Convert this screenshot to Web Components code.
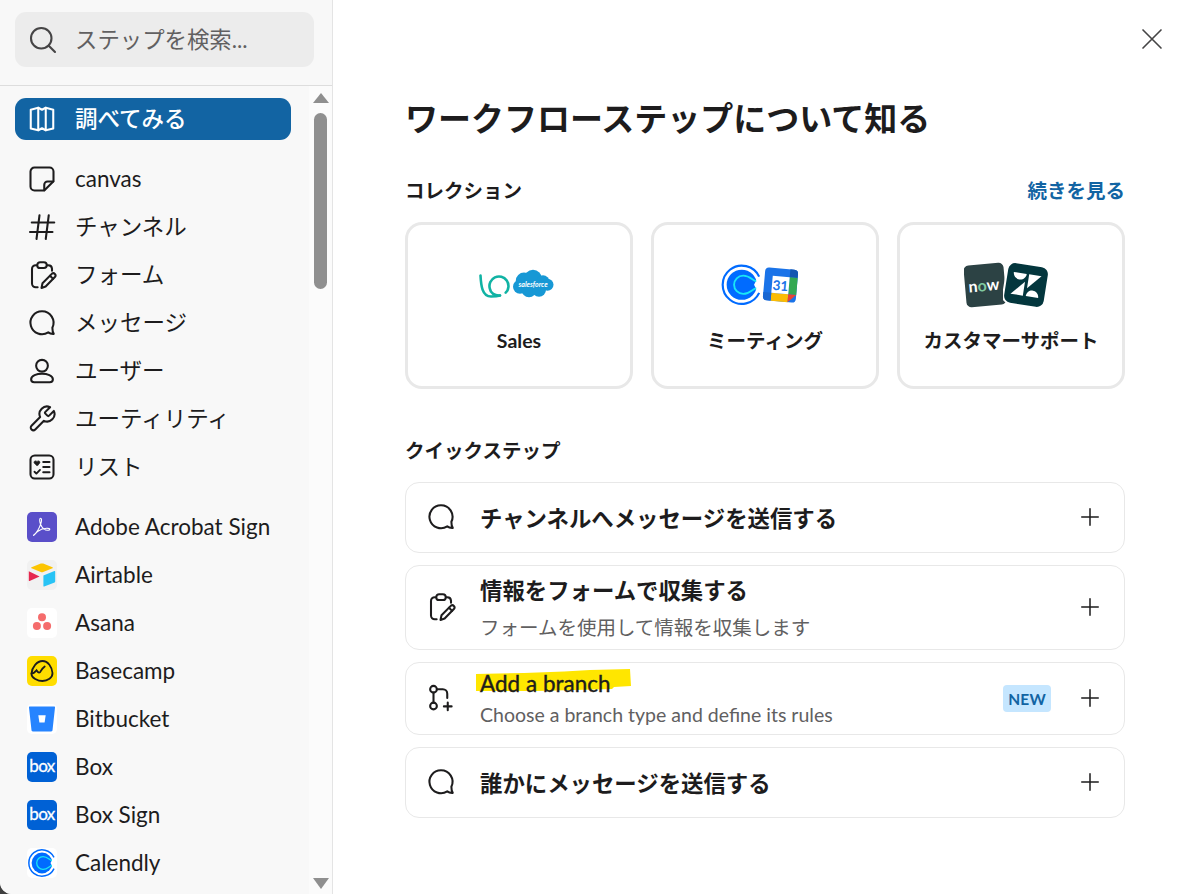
<!DOCTYPE html>
<html lang="ja">
<head>
<meta charset="utf-8">
<title>ワークフローステップ</title>
<style>
  html,body{margin:0;padding:0;background:#3f3f3f;}
  body{font-family:"Lato","Noto Sans CJK JP",sans-serif;color:#1d1c1d;width:1195px;height:894px;overflow:hidden;}
</style>
</head>
<body>
<app-shell>
  <side-bar slot="side">
    <nav-item active icon="book">調べてみる</nav-item>
    <nav-item top="15" icon="canvas">canvas</nav-item>
    <nav-item icon="hash">チャンネル</nav-item>
    <nav-item icon="form">フォーム</nav-item>
    <nav-item icon="message">メッセージ</nav-item>
    <nav-item icon="user">ユーザー</nav-item>
    <nav-item icon="wrench">ユーティリティ</nav-item>
    <nav-item icon="list">リスト</nav-item>
    <nav-item top="12" logo="adobe">Adobe Acrobat Sign</nav-item>
    <nav-item logo="airtable">Airtable</nav-item>
    <nav-item logo="asana">Asana</nav-item>
    <nav-item logo="basecamp">Basecamp</nav-item>
    <nav-item logo="bitbucket">Bitbucket</nav-item>
    <nav-item logo="box">Box</nav-item>
    <nav-item logo="box">Box Sign</nav-item>
    <nav-item logo="calendly">Calendly</nav-item>
  </side-bar>
  <wf-main slot="main">
    <section-head class="first" link="続きを見る">コレクション</section-head>
    <card-grid>
      <collection-card logos="lo,salesforce" overlap="-1" shift="5">Sales</collection-card>
      <collection-card logos="calendlybig,gcal" overlap="-2" shift="11">ミーティング</collection-card>
      <collection-card logos="now,zendesk" overlap="-3.5" shift="9">カスタマーサポート</collection-card>
    </card-grid>
    <section-head class="second">クイックステップ</section-head>
    <step-list>
      <step-row icon="message" h="71" pt="2">チャンネルへメッセージを送信する</step-row>
      <step-row icon="form" h="85" gap="8" pt="3">情報をフォームで収集する<span slot="sub">フォームを使用して情報を収集します</span></step-row>
      <step-row icon="branch" h="73" gap="2" marked badge="NEW">Add a branch<span slot="sub">Choose a branch type and define its rules</span></step-row>
      <step-row icon="message" h="71" pt="2">誰かにメッセージを送信する</step-row>
    </step-list>
  </wf-main>
</app-shell>
<script>
const ICONS = {
  search:'<circle cx="10.6" cy="10.6" r="8.2"/><path d="M16.6 16.6l5 5"/>',
  book:'<path d="M3 4.6 9 3l3 1.6L15 3l6 1.600v15L15 21l-3-1.600L9 21l-6-1.400z"/><path d="M9 3v18M15 3v18"/>',
  canvas:'<path d="M6 2.800h12A3.200 3.200 0 0 1 21.200 6v7.800l-7.400 7.400H6A3.200 3.200 0 0 1 2.800 18V6A3.200 3.200 0 0 1 6 2.800z"/><path d="M21 14h-4.600a2.600 2.600 0 0 0-2.600 2.600V21"/>',
  hash:'<path d="M10 2.600 7.600 21.600M17.400 2.600 15 21.600M3.800 8.400h18M2.400 16h18"/>',
  form:'<rect x="8.200" y="1.800" width="7.600" height="4.600" rx="2.300"/><path d="M8 4.200H7a3 3 0 0 0-3 3v11.600a3 3 0 0 0 3 3h1.500M16 4.200h1a3 3 0 0 1 3 2.800v1.500"/><path d="M11.600 22.400l.8-3.800 7.600-7.700a1.800 1.800 0 0 1 2.500 2.500l-7.600 7.800z"/><path d="M18.400 12.600l2.500 2.500"/>',
  message:'<path d="M12 2.600a9.200 9.200 0 1 0 5 16.900c1 .8 2.600 1.300 4.400 1.200-.7-1-1.100-2.900-1.100-4.900A9.200 9.200 0 0 0 12 2.600z"/>',
  user:'<circle cx="12" cy="7.800" r="4.700"/><path d="M12 14.200c-4.200 0-8.700 1.500-8.700 4.400 0 1.500 1 2.400 2.500 2.400h12.400c1.500 0 2.500-.9 2.500-2.400 0-2.900-4.500-4.400-8.700-4.400z"/>',
  wrench:'<path d="M14.700 6.300a1 1 0 0 0 0 1.400l1.600 1.600a1 1 0 0 0 1.400 0l3.770-3.770a6 6 0 0 1-7.940 7.940l-6.910 6.910a2.120 2.120 0 0 1-3-3l6.910-6.910a6 6 0 0 1 7.940-7.940l-3.760 3.760z"/>',
  list:'<rect x="2.800" y="2.800" width="18.400" height="18.400" rx="3.400"/><path d="M13 8h5M13 12h5M13 16.200h5"/><path d="M6 15.800l1.500 1.500 2.900-3" stroke-width="1.500"/><path d="M8 11 5.900 8.900c-1-1.200.9-2.600 2.100-1.200 1.200-1.400 3.100 0 2.100 1.200z" fill="currentColor" stroke-width=".6"/>',
  branch:'<circle cx="6" cy="5" r="2.700"/><circle cx="6" cy="18.400" r="2.700"/><path d="M6 7.700v8M8.700 5H13.500a3.500 3.500 0 0 1 3.500 3.500V12"/><path d="M17.400 15.600v6.200M14.300 18.700h6.200"/>',
  plus:'<path d="M12 3v18M3 12h18"/>',
  close:'<path d="M3 3l18 18M21 3 3 21"/>'
};
const stroke = n => `<svg viewBox="0 0 24 24" width="100%" height="100%" style="display:block" fill="none" stroke="currentColor" stroke-width="1.650" stroke-linecap="round" stroke-linejoin="round">${ICONS[n]}</svg>`;
const calendly = `<path d="M27 9.400A13.200 13.200 0 1 0 27 20.600" fill="none" stroke="#006bff" stroke-width="1.500"/><circle cx="15" cy="15" r="10.400" fill="#006bff"/><path d="M26 10 23.500 15l2.500 5z" fill="#fff"/><path d="M25 12.500c-2.500 0-4-3.800-9-3.800a6.300 6.300 0 0 0 0 12.600c5 0 6.500-3.800 9-3.800" fill="none" stroke="#19e6f5" stroke-width="1.300"/>`;
// [svg width, svg height, body]
const LOGOS = {
  adobe:[30,30,`<rect width="30" height="30" rx="5" fill="#5a4fc9"/><path d="M6.500 23.200c2.800-1.800 5.900-7 7.500-12 .8-2.900.7-5-.4-5-1.200 0-1.200 3-.1 6 1.500 3.600 4.700 6.200 7.600 6.100 2.100-.1 2.300-1.700.3-1.900-3.200-.4-7.900 1-10.900 3.100-1.900 1.400-3.900 4.600-4 3.700z" fill="none" stroke="#fff" stroke-width="1.100" stroke-linejoin="round"/>`],
  airtable:[30,30,`<rect width="30" height="30" rx="5" fill="#f1f1f1"/><path d="M13.800 3.600 4.600 7.200c-.6.300-.6.900 0 1.100l9.200 3.700c.8.300 1.600.3 2.400 0l9.200-3.700c.6-.2.600-.8 0-1.100l-9.200-3.600c-.8-.3-1.600-.3-2.400 0z" fill="#fcc400"/><path d="M1.800 11.200v9.200c0 .5.400.7.800.5l10-4.500z" fill="#e6284f"/><path d="M16.400 15.600V26c0 .5.400.7.800.5l10.400-4.100c.4-.2.600-.5.600-.9V11.500c0-.5-.4-.7-.8-.5z" fill="#28c3f5"/>`],
  asana:[30,30,`<rect width="30" height="30" rx="5" fill="#fff"/><circle cx="15" cy="9.300" r="4" fill="#f56c6c"/><circle cx="9.900" cy="18" r="4" fill="#f56c6c"/><circle cx="20.100" cy="18" r="4" fill="#f56c6c"/>`],
  basecamp:[30,30,`<rect width="30" height="30" rx="5" fill="#ffdd00"/><path d="M4.500 17.500C5 11 10 5 15.500 5s9.500 6 10 12c.3 4.600-5 8-10 8-4.300 0-11.400-3-11-7.500z" fill="none" stroke="#1d1c1d" stroke-width="1.800"/><path d="M4.500 17.500c2 0 3.500-1.500 5-3.200 1.800 3 3.300 2.900 4.400.6 1-2 2.200-3.200 3.800-4.400" fill="none" stroke="#1d1c1d" stroke-width="1.800" stroke-linecap="round"/>`],
  bitbucket:[30,30,`<rect width="30" height="30" rx="5" fill="#fff"/><path d="M2.800 2.500h24.400c.5 0 .9.400.8 1L25.500 26.300c-.1.700-.6 1.100-1.300 1.100H5.800c-.7 0-1.200-.4-1.300-1.100L2 3.500c-.1-.6.300-1 .8-1z" fill="#2684ff"/><path d="M11.300 11.300h7.400l-1.100 7.100h-5.200z" fill="#fff"/>`],
  box:[30,30,`<rect width="30" height="30" rx="5" fill="#0061d5"/><text x="15" y="20" text-anchor="middle" font-family="Lato,sans-serif" font-size="17" font-weight="400" fill="#fff" stroke="#fff" stroke-width=".3" letter-spacing="-.6">box</text>`],
  calendly:[30,30,`<rect width="30" height="30" rx="5" fill="#fff"/>${calendly}`],
  calendlybig:[44,46,`<g transform="translate(0,1) scale(1.450)">${calendly}</g>`],
  lo:[34,34,`<g fill="none" stroke="#11b3a4" stroke-width="2.600" stroke-linecap="round"><path d="M1.500 7.500C2 17 3 28.500 12 28.500c3 0 6 0 9-1"/><path d="M26.700 24.700A9.500 9.500 0 1 0 10.800 20.500c.6 4.500 5 7.500 10.200 7"/></g>`],
  salesforce:[42,46,`<g transform="translate(0,5.750)"><g fill="#1798d5"><circle cx="12" cy="13" r="8.200"/><circle cx="21" cy="11" r="9"/><circle cx="31" cy="14" r="6.500"/><circle cx="35.500" cy="17" r="6"/><circle cx="8" cy="19" r="7"/><circle cx="17" cy="22" r="7.500"/><circle cx="27" cy="22" r="7"/></g><text x="21" y="19" text-anchor="middle" font-family="Lato,sans-serif" font-size="7" font-style="italic" fill="#fff">salesforce</text></g>`],
  gcal:[37,46,`<g transform="rotate(5 18.500 23) translate(0,4.500)"><rect x="2" y="2" width="33" height="33" rx="4" fill="#1a73e8"/><path d="M27 2h4a4 4 0 0 1 4 4v4h-8z" fill="#1557b0"/><path d="M27 10h8v17h-8z" fill="#34a853"/><path d="M10 27h17v8H10z" fill="#fbbc04"/><path d="M2 27h8v8H6a4 4 0 0 1-4-4z" fill="#1967d2"/><path d="M27 27h8l-8 8z" fill="#ea4335"/><rect x="10" y="10" width="17" height="17" fill="#fff"/><text x="18.500" y="24" text-anchor="middle" font-family="Lato,sans-serif" font-weight="700" font-size="13.500" fill="#1a73e8">31</text></g>`],
  now:[42,46,`<g transform="rotate(-5 21 23)"><rect x="1" y="2" width="40" height="42" rx="5" fill="#2c4244"/><text x="4.500" y="29" font-family="Lato,sans-serif" font-weight="700" font-size="16" fill="#fff">n<tspan fill="#7fc9a0">o</tspan>w</text></g>`],
  zendesk:[46,46,`<g transform="rotate(9 23 23)"><rect x="2" y="2" width="42" height="42" rx="8" fill="#03363d" stroke="#fff" stroke-width="2"/><g fill="#fff"><path d="M9 12h13c0 4-3 6.500-6.500 6.500S9 16 9 12z"/><path d="M24.500 12H37L24.500 26z"/><path d="M21.500 20 9 34h12.500z"/><path d="M24.500 34H37c0-4-3-6.500-6.250-6.500S24.500 30 24.500 34z"/></g></g>`]
};
const logoSvg = n => { const [w,h,b] = LOGOS[n]; return `<svg width="${w}" height="${h}" viewBox="0 0 ${w} ${h}">${b}</svg>`; };

function def(name, css, html, init){
  customElements.define(name, class extends HTMLElement{
    constructor(){ super(); this.attachShadow({mode:'open'}); }
    connectedCallback(){
      const h = typeof html==='function' ? html(this) : html;
      this.shadowRoot.innerHTML = `<style>${css}</style>${h}`;
      if(init) init(this);
    }
  });
}

def('wf-icon', `:host{display:inline-block;width:30px;height:30px;flex:none;}`, el=>stroke(el.getAttribute('name')));

def('app-shell', `
  :host{display:flex;width:1195px;height:894px;background:#fff;border-bottom-left-radius:12px;overflow:hidden;}
`, `<slot name="side"></slot><slot name="main"></slot>`);

def('search-box', `
  :host{display:flex;align-items:center;gap:17px;height:55px;background:#ececec;border-radius:11px;padding:0 0 0 13px;font-size:22.400px;color:#616061;}
  wf-icon{color:#454445;}
  span{margin-top:-4px;}
`, `<wf-icon name="search"></wf-icon><span>ステップを検索...</span>`);

def('scroll-track', `
  :host{display:flex;flex-direction:column;align-items:center;width:23px;background:#fbfbfb;flex:none;box-sizing:border-box;padding:7px 0 5px;height:100%;}
  .up,.down{width:0;height:0;border-left:8px solid transparent;border-right:8px solid transparent;}
  .up{border-bottom:10px solid #8f8f8f;}
  .down{border-top:11px solid #8f8f8f;margin-top:auto;}
  .thumb{width:13px;height:176px;background:#8f8f8f;border-radius:7px;margin-top:10px;}
`, `<div class="up"></div><div class="thumb"></div><div class="down"></div>`);

def('side-bar', `
  :host{display:flex;flex-direction:column;width:333px;height:894px;flex:none;box-sizing:border-box;background:#f8f8f8;border-right:1px solid #e4e4e4;overflow:hidden;}
  .head{padding:12px 18px 18px 15px;border-bottom:1px solid #dddddd;flex:none;}
  .body{display:flex;flex:1;min-height:0;}
  .list{flex:1;min-width:0;padding:12px 18px 0 15px;overflow:hidden;}
`, `<div class="head"><search-box></search-box></div><div class="body"><div class="list"><slot></slot></div><scroll-track></scroll-track></div>`);

def('nav-item', `
  :host{display:flex;align-items:center;height:48px;gap:18px;padding-left:12px;font-size:22.500px;line-height:30px;color:#1d1c1d;white-space:nowrap;}
  :host([active]){height:42px;background:#1264a3;color:#fff;border-radius:11px;font-weight:500;}
  svg{display:block;flex:none;}
  .lg{width:30px;height:30px;flex:none;}
`, el=>{
  const i = el.getAttribute('icon'), l = el.getAttribute('logo');
  const g = i ? `<wf-icon name="${i}"></wf-icon>` : `<div class="lg">${logoSvg(l)}</div>`;
  return `${g}<span><slot></slot></span>`;
}, el=>{ const t = el.getAttribute('top'); if(t) el.style.marginTop = t+'px'; });

def('wf-main', `
  :host{display:block;position:relative;flex:1;min-width:0;padding:96px 70px 0 72px;box-sizing:border-box;}
  h1{margin:0 0 36px 0;font-size:33px;line-height:44px;font-weight:700;color:#1d1c1d;}
  .close{position:absolute;top:27px;left:807px;width:24px;height:24px;color:#454445;}
  wf-icon{width:24px;height:24px;display:block;}
`, `<h1>ワークフローステップについて知る</h1><div class="close"><wf-icon name="close"></wf-icon></div><slot></slot>`);

def('section-head', `
  :host{display:flex;justify-content:space-between;align-items:center;box-sizing:border-box;height:28px;padding-bottom:2px;margin:0 0 18px 0;font-size:19.500px;font-weight:700;}
  :host(.second){margin-top:47px;}
  a{color:#1264a3;text-decoration:none;}
`, el=>{ const l = el.getAttribute('link'); return `<span><slot></slot></span>${l?`<a>${l}</a>`:''}`; });

def('card-grid', `:host{display:grid;grid-template-columns:repeat(3,228px);gap:18px;}`, `<slot></slot>`);

def('collection-card', `
  :host{display:flex;flex-direction:column;align-items:center;box-sizing:border-box;height:167px;border:3px solid #e8e8e8;border-radius:17px;padding-top:37px;font-size:19.500px;font-weight:700;line-height:26px;}
  .logos{display:flex;align-items:center;justify-content:center;height:46px;margin-bottom:20px;gap:0;padding-right:var(--s,0px);}
  .logos svg + svg{margin-left:var(--g,0px);}
  svg{display:block;flex:none;}
`, el=>{
  const ls = el.getAttribute('logos').split(',');
  return `<div class="logos">${ls.map(logoSvg).join('')}</div><div><slot></slot></div>`;
}, el=>{
  el.style.setProperty('--g', el.getAttribute('overlap')+'px');
  el.style.setProperty('--s', el.getAttribute('shift')+'px');
});

def('step-list', `:host{display:flex;flex-direction:column;gap:12px;}`, `<slot></slot>`);

def('step-row', `
  :host{display:flex;align-items:center;box-sizing:border-box;border:1.400px solid #e8e8e8;border-radius:14px;padding:0 20px 0 20px;background:#fff;}
  wf-icon{width:30px;height:30px;margin:0 24px 2px 0;color:#1d1c1d;}
  .txt{flex:1;min-width:0;display:flex;flex-direction:column;}
  .t{position:relative;font-size:22.400px;line-height:30px;font-weight:700;}
  :host([marked]) .t{font-weight:400;-webkit-text-stroke:.4px #1d1c1d;letter-spacing:.05px;}
  .t span{position:relative;}
  .s{font-size:19.500px;line-height:28px;color:#616061;}
  svg.mark{position:absolute;left:-4px;top:0;width:156px;height:24px;}
  .badge{display:flex;align-items:center;justify-content:center;width:48px;height:27px;background:#c5e6ff;color:#1264a3;font-size:15.500px;font-weight:700;border-radius:4px;margin-right:28px;letter-spacing:.2px;}
  .plus{width:22px;height:22px;color:#1d1c1d;margin:0 3px 2px 0;}
  .plus wf-icon{width:22px;height:22px;margin:0;display:block;}
`, el=>{
  const mark = el.hasAttribute('marked') ? `<svg class="mark" viewBox="0 0 156 24"><path d="M0 5 48 4 88 2.500 114 1 154 0 155 17 138 18 136 20 60 22 0 22z" fill="#ffe600"/></svg>` : '';
  const b = el.getAttribute('badge');
  const hasSub = el.querySelector('[slot=sub]');
  return `<wf-icon name="${el.getAttribute('icon')}"></wf-icon>
  <div class="txt" style="padding-top:${el.getAttribute('pt')||0}px"><div class="t">${mark}<span><slot></slot></span></div>${hasSub?`<div class="s" style="margin-top:${el.getAttribute('gap')||0}px"><slot name="sub"></slot></div>`:''}</div>
  ${b?`<div class="badge">${b}</div>`:''}<div class="plus"><wf-icon name="plus"></wf-icon></div>`;
}, el=>{ el.style.height = el.getAttribute('h')+'px'; });
</script>
</body>
</html>
